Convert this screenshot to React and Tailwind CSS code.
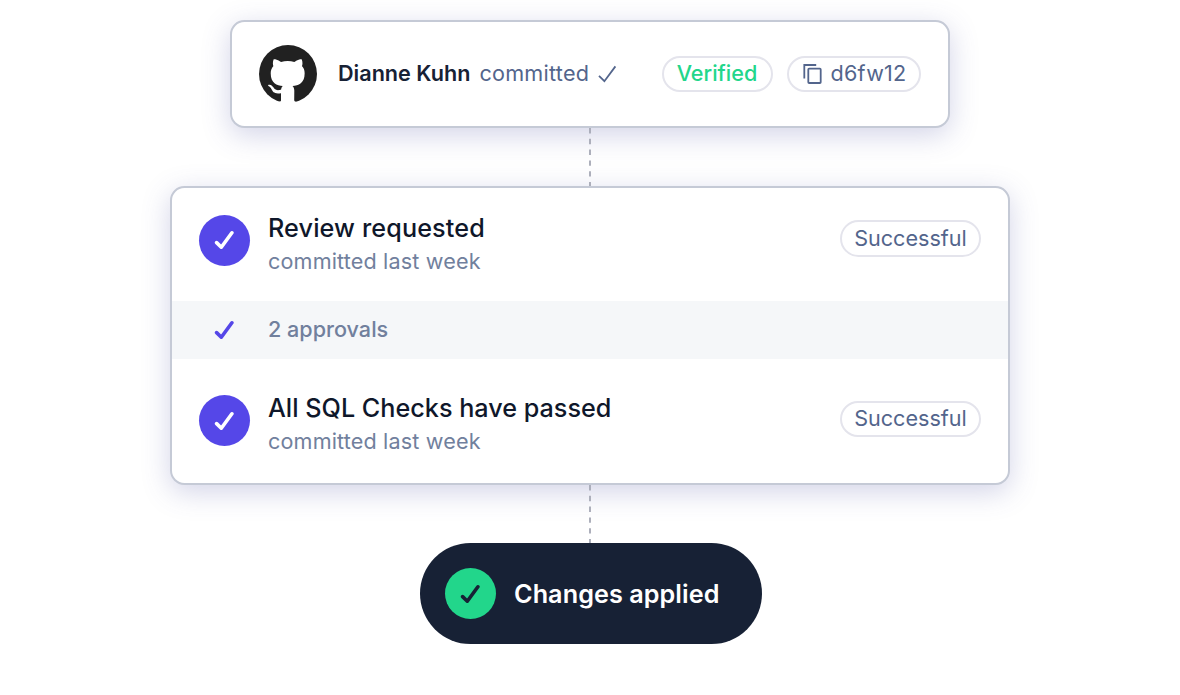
import React from "react";

function GithubMark() {
  return (
    <svg className="size-[58px] shrink-0" viewBox="0 0 16 16" aria-hidden="true">
      <circle cx="8" cy="8" r="8" fill="#212121" />
      <path
        transform="matrix(.918 0 0 .9 .55 .94)"
        fill="#fff"
        d="M5.47 16.3c.4.07.55-.17.55-.38 0-.19-.01-1.53-.01-2.2-2.01.37-2.53-.49-2.69-.94-.09-.23-.48-.94-.82-1.13-.28-.15-.68-.52-.01-.53.63-.01 1.08.58 1.23.82.72 1.21 1.87.87 2.33.66.07-.52.28-.87.51-1.07-1.78-.2-3.64-.89-3.64-3.95 0-.87.31-1.59.82-2.15-.08-.2-.36-1.02.08-2.12 0 0 .67-.21 2.2.82.64-.18 1.32-.27 2-.27s1.36.09 2 .27c1.53-1.04 2.2-.82 2.2-.82.44 1.1.16 1.92.08 2.12.51.56.82 1.27.82 2.15 0 3.07-1.87 3.75-3.65 3.95.29.25.54.73.54 1.48 0 1.07-.01 2.64-.01 2.91 0 .21.15.46.55.38V18H5.47z"
      />
    </svg>
  );
}

function Check({ className = "" }) {
  return (
    <svg
      className={`h-[20px] w-[20px] shrink-0 ${className}`}
      viewBox="0 0 20 20"
      fill="none"
      stroke="currentColor"
      strokeWidth="3.6"
      strokeLinecap="round"
      strokeLinejoin="round"
      aria-hidden="true"
    >
      <path d="M2.6 12.6 7.3 17.2 17.9 2.8" />
    </svg>
  );
}

function StatusDot({ className }) {
  return (
    <div className={`flex size-[51px] shrink-0 items-center justify-center rounded-full ${className}`}>
      <Check className="mr-px" />
    </div>
  );
}

function Pill({ children, className = "" }) {
  return (
    <div
      className={`flex shrink-0 items-center justify-center rounded-full border-2 border-[#e4e4ec] text-[21.6px] leading-none ${className}`}
    >
      {children}
    </div>
  );
}

function Connector() {
  return (
    <svg className="relative h-[58px] w-[2px] shrink-0" viewBox="0 0 2 58" aria-hidden="true">
      <path d="M1 0V58" stroke="#a9acb8" strokeWidth="1.9" strokeDasharray="5.4" />
    </svg>
  );
}

function CheckRow({ title, className, titleClass = "" }) {
  return (
    <div className={`flex items-start px-[27px] ${className}`}>
      <StatusDot className="bg-[#5547e8] text-white" />
      <div className="-mt-px ml-[18px] flex-1">
        <div className={`text-[25.2px] leading-[28px] font-medium text-[#0f172a] ${titleClass}`}>{title}</div>
        <div className="mt-[6px] text-[21.6px] leading-[26px] tracking-[0.15px] text-[#71809d]">committed last week</div>
      </div>
      <Pill className="mt-[5.5px] h-[36.5px] w-[141px] text-[#53658c]">Successful</Pill>
    </div>
  );
}

export default function App() {
  return (
    <main className="flex h-[695px] w-[1180px] flex-col items-center overflow-hidden bg-white pt-[20px] font-['Inter',sans-serif]">
      <section className="flex h-[108px] w-[720px] shrink-0 items-center rounded-[14.4px] border-2 border-[#c5cad6] bg-white px-[27px] shadow-[0_7px_28px_rgba(80,85,165,0.25)]">
        <GithubMark />
        <span className="mb-[2px] ml-[21px] text-[21.6px] leading-[26px] font-semibold text-[#172135]">Dianne Kuhn</span>
        <span className="mb-[2px] ml-[9px] text-[21.6px] leading-[26px] tracking-[0.25px] text-[#53658c]">committed</span>
        <svg className="ml-[9px] h-[20px] w-[20px]" viewBox="0 0 20 20" fill="none" aria-hidden="true">
          <path d="M1 11.8 6.4 17.2 17.4 2.4" stroke="#53658c" strokeWidth="1.8" />
        </svg>
        <Pill className="ml-auto h-9 w-[111px] pr-px font-medium text-[#22d68b]">Verified</Pill>
        <Pill className="ml-[14px] h-9 w-[134px] gap-[8px] pl-[2px] text-[#53658c]">
          <svg className="h-[21px] w-[19px]" viewBox="0 0 19 21" fill="none" stroke="currentColor" strokeWidth="1.8" aria-hidden="true">
            <path d="M1.3 14.6V1H13.2" />
            <rect x="5.3" y="4.6" width="12.4" height="14.4" rx="0.8" />
          </svg>
          <span className="tracking-[0.25px]">d6fw12</span>
        </Pill>
      </section>

      <Connector />

      <section className="h-[299px] w-[840px] shrink-0 overflow-hidden rounded-[14.4px] border-2 border-[#c5cad6] bg-white shadow-[0_7px_28px_rgba(80,85,165,0.25)]">
        <CheckRow title="Review requested" className="h-[113px] pt-[26.8px]" titleClass="tracking-[0.12px]" />
        <div className="flex h-[58px] items-center bg-[#f5f7f9] pl-[42px]">
          <Check className="text-[#5547e8]" />
          <span className="mb-[2px] ml-[34px] text-[21.6px] leading-[26px] font-medium text-[#71809d]">2 approvals</span>
        </div>
        <CheckRow title="All SQL Checks have passed" className="h-[124px] pt-[36px]" />
      </section>

      <Connector />

      <section className="ml-[2px] flex h-[101px] w-[342px] shrink-0 items-center rounded-full bg-[#172135] pl-[25px]">
        <StatusDot className="bg-[#22d68b] text-[#172135]" />
        <span className="ml-[18px] text-[25.2px] leading-[30px] font-semibold tracking-[0.07px] text-white">Changes applied</span>
      </section>
    </main>
  );
}
